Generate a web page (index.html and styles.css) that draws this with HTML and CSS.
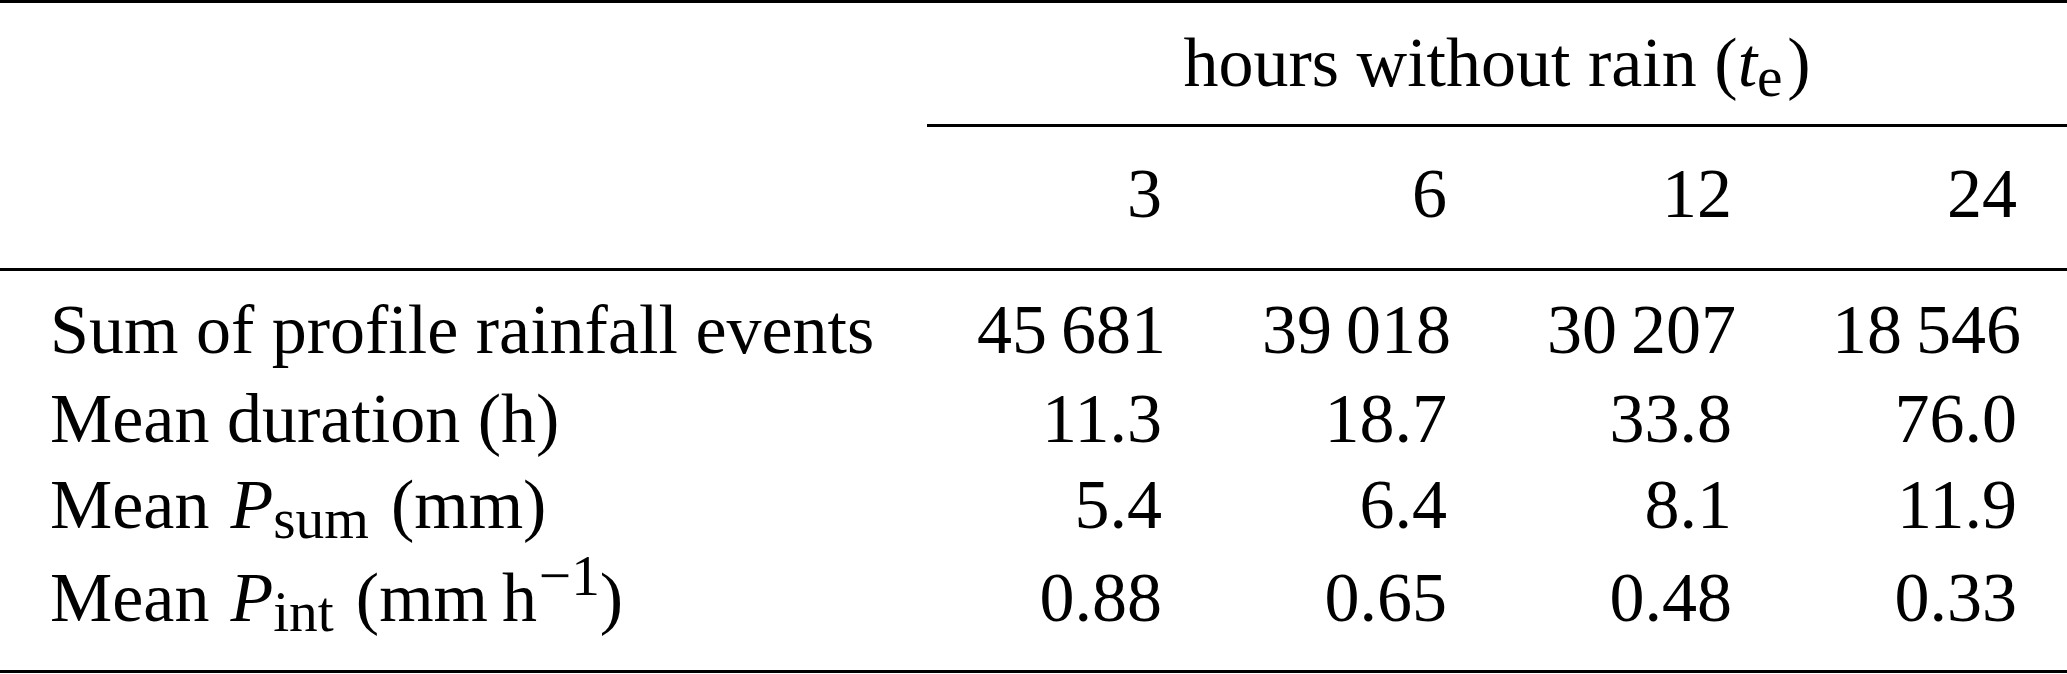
FILE: index.html
```html
<!DOCTYPE html><html><head>
    <meta name="viewport" content="width=device-width, initial-scale=1">
    <title>Rainfall events</title>
    <link rel="stylesheet" href="styles.css">
  </head><body>
    <div class="tbl">
      <div class="stub"></div>
      <div class="group">hours without rain (<i>t</i><sub>e</sub>)</div>
      <div class="cmid"></div>
      <div class="row head">
        <div class="num">3</div>
        <div class="num">6</div>
        <div class="num">12</div>
        <div class="num">24</div>
      </div>
      <div class="rule"></div>
      <div class="row r1">
        <div class="label">Sum of profile rainfall events</div>
        <div class="num">45&thinsp;681</div>
        <div class="num">39&thinsp;018</div>
        <div class="num">30&thinsp;207</div>
        <div class="num">18&thinsp;546</div>
      </div>
      <div class="row">
        <div class="label">Mean duration (h)</div>
        <div class="num">11.3</div>
        <div class="num">18.7</div>
        <div class="num">33.8</div>
        <div class="num">76.0</div>
      </div>
      <div class="row">
        <div class="label">Mean <i>P</i><sub>sum</sub> (mm)</div>
        <div class="num">5.4</div>
        <div class="num">6.4</div>
        <div class="num">8.1</div>
        <div class="num">11.9</div>
      </div>
      <div class="row r4">
        <div class="label">Mean <i>P</i><sub>int</sub> (mm&thinsp;h<sup>&minus;1</sup>)</div>
        <div class="num">0.88</div>
        <div class="num">0.65</div>
        <div class="num">0.48</div>
        <div class="num">0.33</div>
      </div>
    </div>
  </body></html>
```

FILE: styles.css
```css
body {margin: 0; background: #fff; color: #000; font-family: "Liberation Serif", "Times New Roman", serif; font-size: 70px;}

.tbl {display: grid; grid-template-columns: 927px repeat(4, 285px); width: 2067px; border-top: 3px solid #000; border-bottom: 3px solid #000;}
.stub {grid-row: span 3;}
.group {grid-column: span 4; text-align: center; line-height: 84px; padding: 18px 0 19px;}
.cmid {grid-column: span 4; height: 3px; background: #000;}
.rule {grid-column: 1 / -1; height: 3px; background: #000;}

.row {display: contents;}
.row > div {line-height: 86px; padding: 0 50px; white-space: nowrap;}
.head > div {line-height: 84px; padding-top: 25px; padding-bottom: 32px;}
.r1 > div {padding-top: 16px; padding-bottom: 3px;}
.r4 > div {padding-top: 7px; padding-bottom: 29px;}

.num {text-align: right;}
.label {text-align: left;}
.label i {margin-left: 0.05em;}

sub, sup {font-size: 0.82em; line-height: 0;}
sub {vertical-align: -10px; margin-right: 0.08em;}
sup {vertical-align: 26px; margin-left: 0.03em;}
```
